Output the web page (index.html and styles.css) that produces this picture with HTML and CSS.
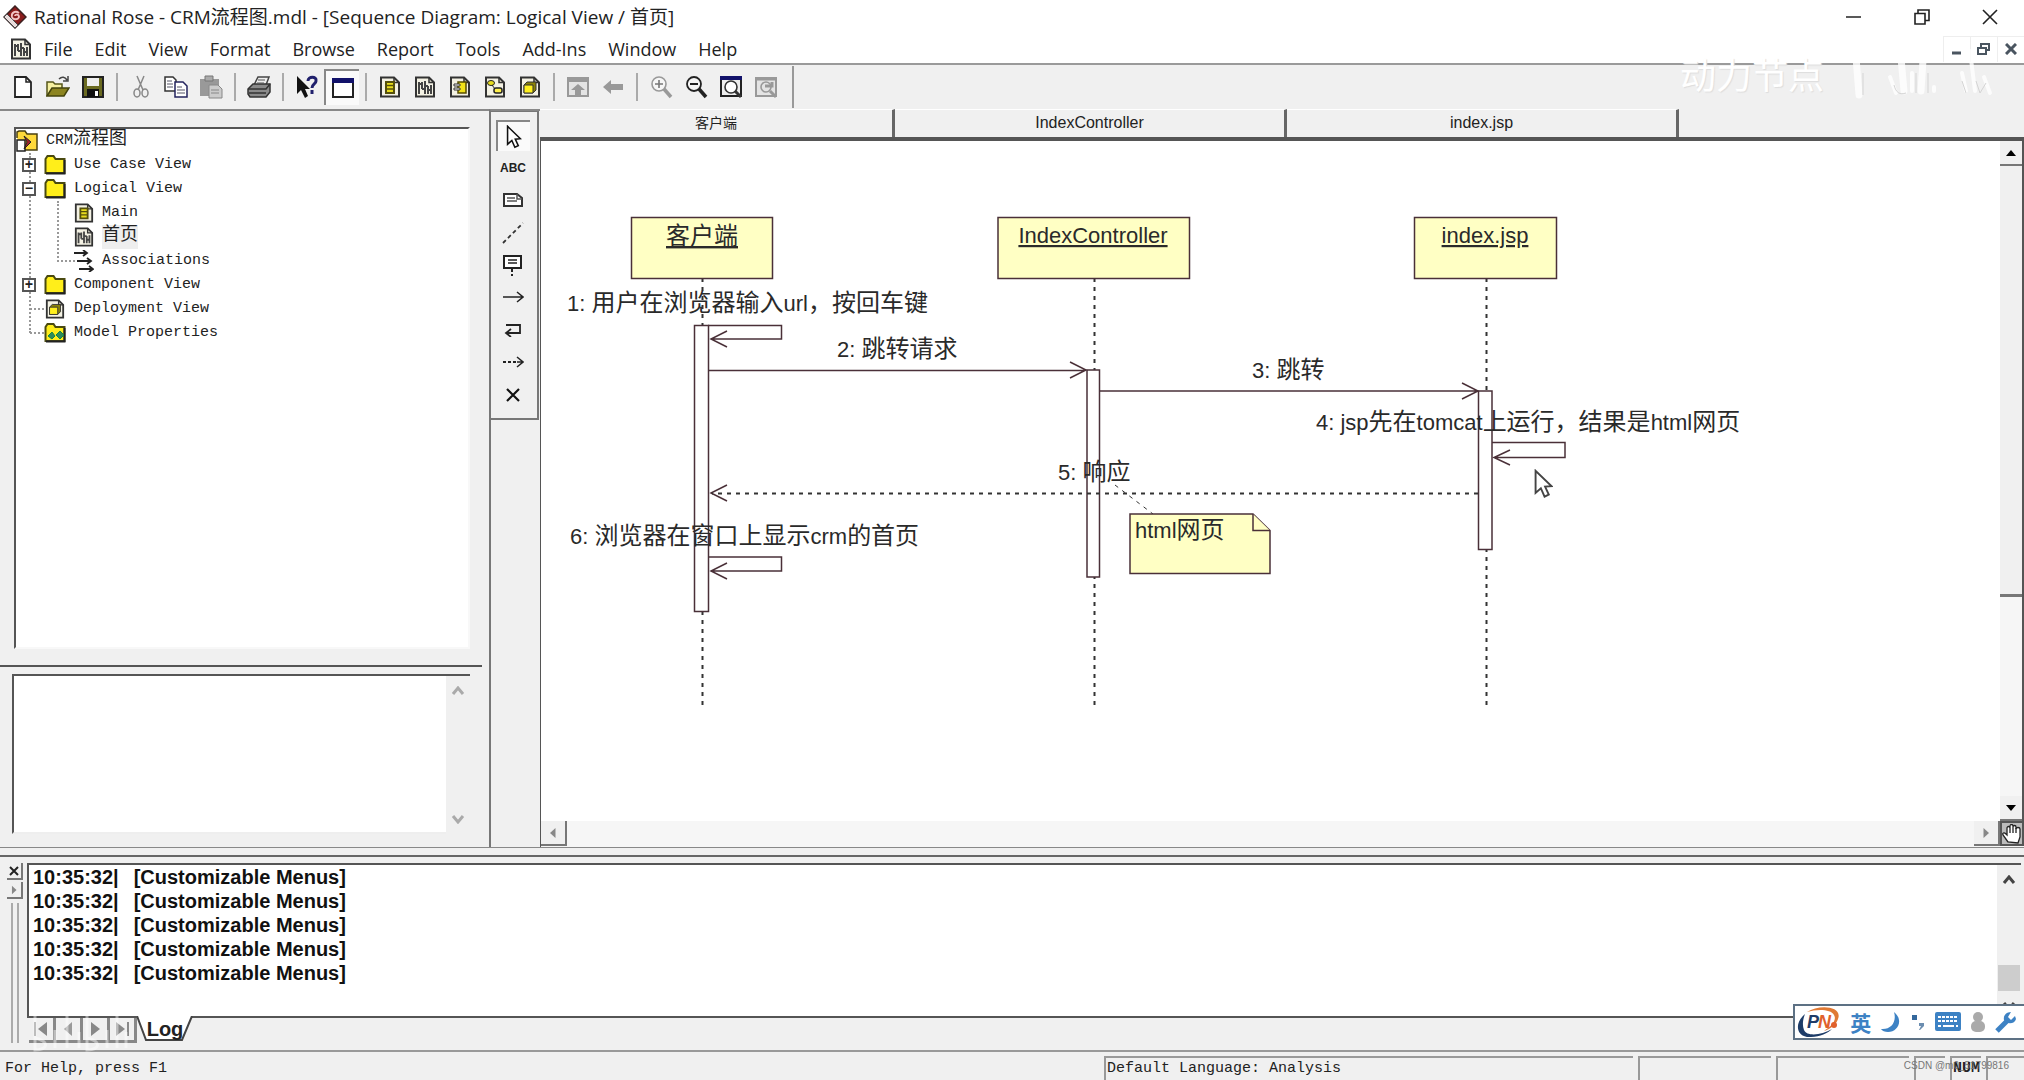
FILE: index.html
```html
<!DOCTYPE html>
<html lang="zh-CN">
<head>
<meta charset="utf-8">
<title>Rational Rose - CRM流程图.mdl</title>
<link rel="stylesheet" href="styles.css">
</head>
<body>
<svg class="sprite" aria-hidden="true">
  <symbol id="page" viewBox="0 0 22 22"><path d="M2 1.500h13l5 5v14H2z" fill="#f4f2e4" stroke="#333" stroke-width="2"/><path d="M15 1.500v5h5" fill="none" stroke="#333" stroke-width="1.500"/></symbol>
  <symbol id="class-doc" viewBox="0 0 22 22"><use href="#page"/><path d="M7 6h8v11H7z" fill="#e8dc1c" stroke="#55500c" stroke-width="2"/><path d="M7 9.500h8M7 13h8" stroke="#55500c" stroke-width="1.500"/></symbol>
  <symbol id="seq-doc" viewBox="0 0 22 22"><use href="#page"/><path d="M5 6v12M8 6v7M11 5v13M14 10v8M17 9v9M5 8h3M8 13h3M11 10h3M14 14h3" stroke="#444" stroke-width="2" fill="none"/></symbol>
  <symbol id="comp-doc" viewBox="0 0 22 22"><use href="#page"/><path d="M9 6h8v11H9z" fill="#f2e21a" stroke="#554c00" stroke-width="1.500"/><path d="M5 8h6v2H5zM5 12h6v2H5z" fill="#fff" stroke="#333"/></symbol>
  <symbol id="state-doc" viewBox="0 0 22 22"><use href="#page"/><ellipse cx="7" cy="7" rx="3.500" ry="2.500" fill="#e8dc1c" stroke="#222"/><path d="M8 9l3 4" stroke="#222"/><rect x="10" y="12" width="8" height="5" rx="2" fill="#fff04a" stroke="#222" stroke-width="1.500"/></symbol>
  <symbol id="cube-doc" viewBox="0 0 22 22"><use href="#page"/><path d="M5 9l3-3h9v8l-3 3H5z" fill="#8a8208" stroke="#333"/><path d="M5 9h9v8H5z" fill="#fff01e" stroke="#333"/></symbol>
  <symbol id="folder" viewBox="0 0 22 20"><path d="M1.500 18V4l2-3h6l2 3h9v14z" fill="#ffee1a" stroke="#4a4a10" stroke-width="2"/><path d="M20.500 5v13.500H2" fill="none" stroke="#222" stroke-width="2"/></symbol>
  <symbol id="pointer" viewBox="0 0 18 28"><path d="M1.500 1.500v21l5-4.500 3.500 8 4-2-3.500-7.500 6-.5z" stroke-width="1.800"/></symbol>
  <symbol id="chevron" viewBox="0 0 14 10"><path d="M2 8l5-6 5 6" fill="none" stroke="currentColor" stroke-width="3"/></symbol>
  <symbol id="tri" viewBox="0 0 12 12"><path d="M8.500 1v10L3 6z" fill="currentColor"/></symbol>
</svg>

<header class="titlebar">
  <svg class="app-icon" width="24" height="24" viewBox="0 0 24 24"><path d="M12 1l11 11-11 11L1 12z" fill="#8b1c1c" stroke="#3c2020" stroke-width="1.500"/><path d="M1 12l11 11 3-3L4 9z" fill="#e9dcdc" stroke="#444"/><path d="M16 8c-4-3-8 0-7 4 1 3 6 3 7 0 0-3-4-3-4-1" fill="none" stroke="#f3c4c4" stroke-width="1.800"/></svg>
  <h1 class="title">Rational Rose - CRM流程图.mdl - [Sequence Diagram: Logical View / 首页]</h1>
  <div class="window-buttons">
    <button aria-label="Minimize"><svg width="16" height="16"><path d="M0 8h15" stroke="#222" stroke-width="1.500"/></svg></button>
    <button aria-label="Restore"><svg width="16" height="16"><path d="M1 4.500h10V15H1zM4 4V1h11v10.500h-4" fill="none" stroke="#222" stroke-width="1.600"/></svg></button>
    <button aria-label="Close"><svg width="16" height="16"><path d="M1 1l14 14M15 1L1 15" stroke="#222" stroke-width="1.600"/></svg></button>
  </div>
</header>

<nav class="menubar">
  <svg class="doc-icon" width="22" height="22"><use href="#seq-doc"/></svg>
  <button>File</button><button>Edit</button><button>View</button><button>Format</button><button>Browse</button><button>Report</button><button>Tools</button><button>Add-Ins</button><button>Window</button><button>Help</button>
  <div class="mdi-buttons">
    <button aria-label="Minimize diagram"><svg width="12" height="14"><path d="M1 11h9" stroke="#4a5560" stroke-width="3"/></svg></button>
    <button aria-label="Restore diagram"><svg width="14" height="14"><path d="M1 6h8v6H1zM4 5V2h8v6H9" fill="none" stroke="#4a5560" stroke-width="2"/></svg></button>
    <button aria-label="Close diagram"><svg width="12" height="12"><path d="M1 1l10 10M11 1L1 11" stroke="#4a5560" stroke-width="3"/></svg></button>
  </div>
  <div class="watermark" aria-hidden="true"><span>动力节点</span>
    <svg width="150" height="60" viewBox="0 0 150 60"><g fill="none" stroke="#fff" stroke-linecap="round" opacity=".8"><path d="M9 2l4 50M54 4l4 44M78 2l-3 46" stroke-width="7"/><path d="M44 34l6 16M66 30v18M88 44v4M124 8l5 40M138 34l6 16M116 30l4 18" stroke-width="4"/></g><g fill="none" stroke="#d4d4d4"><path d="M17 30v22M48 42c2 8 6 10 12 8M70 30v20M82 30v20M130 38l4 12 6-10M116 38l4 12"/></g></svg>
  </div>
</nav>

<div class="toolbar" role="toolbar">
  <button aria-label="New"><svg width="24" height="24"><path d="M4 2h11l5 5v15H4z" fill="#fff" stroke="#222" stroke-width="1.800"/><path d="M15 2v5h5" fill="none" stroke="#222" stroke-width="1.500"/></svg></button>
  <button aria-label="Open"><svg width="24" height="24"><path d="M1 21V7h6l2 2h7v4" fill="#f6f0a0" stroke="#55551a" stroke-width="1.500"/><path d="M1 21l5-8h17l-5 8z" fill="#8c8420" stroke="#44440c" stroke-width="1.500"/><path d="M13 4c3-3 6-2 8 1m1-4v5h-5" fill="none" stroke="#444" stroke-width="1.500"/></svg></button>
  <button aria-label="Save"><svg width="24" height="24"><path d="M2 2h20v20H2z" fill="#6a6a20" stroke="#222" stroke-width="2"/><path d="M6 3h12v8H6z" fill="#eee"/><path d="M6 14h12v8H6z" fill="#111"/><path d="M14 16h3v5h-3z" fill="#fff"/></svg></button>
  <i class="sep"></i>
  <button aria-label="Cut"><svg width="24" height="24"><g fill="none" stroke="#888" stroke-width="1.500"><path d="M8 1l6 14M15 1L9 15"/><ellipse cx="8" cy="18" rx="3" ry="4"/><ellipse cx="16" cy="18" rx="3" ry="4"/></g></svg></button>
  <button aria-label="Copy"><svg width="24" height="24"><g fill="#fff" stroke="#333" stroke-width="1.500"><path d="M1 2h8l3 3v11H1z"/><path d="M11 7h8l4 4v11H11z" stroke="#23235e"/></g><path d="M3 6h5M3 9h6M3 12h6M13 12h5M13 15h8M13 18h8" stroke="#556"/></svg></button>
  <button aria-label="Paste"><svg width="24" height="24"><path d="M1 4h19v17H1z" fill="#999"/><path d="M6 1h8v5H6z" fill="#aaa" stroke="#777"/><path d="M10 10h9l4 4v9H10z" fill="#ccc" stroke="#888"/><path d="M12 15h8M12 18h8" stroke="#888"/></svg></button>
  <i class="sep"></i>
  <button aria-label="Print"><svg width="26" height="24"><path d="M8 10l4-8h11l-3 8z" fill="#eee" stroke="#444" stroke-width="1.500"/><path d="M2 14l5-5h17v8l-4 5H4l-2-3z" fill="#8a8a8a" stroke="#333" stroke-width="1.500"/><path d="M2 14h18l4-5M3 18h17" fill="none" stroke="#333" stroke-width="1.500"/><path d="M12 5h7M11 8h7" stroke="#555"/></svg></button>
  <i class="sep"></i>
  <button aria-label="Context help"><svg width="26" height="24"><path d="M3 1v18l4-4 4 8 3-2-3-7h5z" fill="#111"/><path d="M14 6c0-5 9-5 8 0 0 3-4 3-4 7m0 2v4" fill="none" stroke="#20206c" stroke-width="3"/></svg></button>
  <button class="pressed" aria-label="Documentation window"><svg width="24" height="24"><path d="M2 3h20v18H2z" fill="#fff" stroke="#222" stroke-width="2"/><path d="M1 2h22v5H1z" fill="#12126a"/></svg></button>
  <i class="sep"></i>
  <button aria-label="Class diagram"><svg width="22" height="22"><use href="#class-doc"/></svg></button>
  <button aria-label="Interaction diagram"><svg width="22" height="22"><use href="#seq-doc"/></svg></button>
  <button aria-label="Component diagram"><svg width="22" height="22"><use href="#comp-doc"/></svg></button>
  <button aria-label="State diagram"><svg width="22" height="22"><use href="#state-doc"/></svg></button>
  <button aria-label="Deployment diagram"><svg width="22" height="22"><use href="#cube-doc"/></svg></button>
  <i class="sep"></i>
  <button aria-label="Parent"><svg width="24" height="24"><path d="M2 3h20v18H2z" fill="#e4e4e4" stroke="#999" stroke-width="2"/><path d="M2 5h20" stroke="#999" stroke-width="4"/><path d="M12 9l7 6h-4v6H9v-6H5z" fill="#999"/></svg></button>
  <button aria-label="Previous"><svg width="24" height="24"><path d="M2 12l8-7v4h12v6H10v4z" fill="#999"/></svg></button>
  <i class="sep"></i>
  <button aria-label="Zoom in"><svg width="24" height="24"><circle cx="10" cy="9" r="7" fill="#f6f6f6" stroke="#999" stroke-width="1.600"/><path d="M6 9h8M10 5v8" stroke="#777" stroke-width="1.600"/><path d="M15 14l7 8" stroke="#999" stroke-width="3.500"/></svg></button>
  <button aria-label="Zoom out"><svg width="24" height="24"><circle cx="10" cy="9" r="7" fill="#f6f6f6" stroke="#222" stroke-width="1.800"/><path d="M6 9h8" stroke="#222" stroke-width="2"/><path d="M15 14l7 8" stroke="#222" stroke-width="3.500"/></svg></button>
  <button aria-label="Fit in window"><svg width="24" height="24"><path d="M2 3h20v18H2z" fill="#eee" stroke="#222" stroke-width="2"/><path d="M1 3h22" stroke="#12126a" stroke-width="4"/><circle cx="12" cy="12" r="6" fill="#fff" stroke="#333" stroke-width="1.600"/><path d="M16 16l6 6" stroke="#333" stroke-width="3"/></svg></button>
  <button aria-label="Undo fit"><svg width="24" height="24"><path d="M2 3h20v18H2z" fill="#e4e4e4" stroke="#999" stroke-width="2"/><path d="M1 4h22" stroke="#999" stroke-width="3"/><circle cx="12" cy="12" r="5" fill="none" stroke="#999" stroke-width="1.600"/><path d="M11 11h7V7M16 16l6 6" fill="none" stroke="#999" stroke-width="3"/></svg></button>
  <i class="toolbar-end"></i>
</div>

<main class="workspace">
  <aside class="browser">
    <div class="tree-box">
      <ul class="tree">
        <li><div class="row"><svg class="root-icon" width="22" height="22"><path d="M1 8V2l2-1h6l2 3h10v16H8" fill="#ffd93a" stroke="#4a4010" stroke-width="1.500"/><path d="M1 10h8v11H1z" fill="#fff" stroke="#222" stroke-width="1.500"/><path d="M8 6l7 6-7 7 3-7z" fill="#a3242a" stroke="#222"/></svg><span>CRM<b>流程图</b></span></div>
          <ul class="branch">
            <li><div class="row"><button class="toggle" aria-label="Expand">+</button><svg width="22" height="20"><use href="#folder"/></svg><span>Use Case View</span></div></li>
            <li><div class="row"><button class="toggle" aria-label="Collapse">−</button><svg width="22" height="20"><use href="#folder"/></svg><span>Logical View</span></div>
              <ul class="leaves">
                <li><div class="row"><svg width="20" height="20"><use href="#class-doc"/></svg><span>Main</span></div></li>
                <li><div class="row"><svg width="20" height="20"><use href="#seq-doc"/></svg><span class="selected"><b>首页</b></span></div></li>
                <li><div class="row"><svg width="20" height="22"><path d="M0 3h13M9 0l4 3-4 3M3 11h14M13 8l4 3-4 3M5 19h14M15 16l4 3-4 3" fill="none" stroke="#222" stroke-width="1.800"/></svg><span>Associations</span></div></li>
              </ul>
            </li>
            <li><div class="row"><button class="toggle" aria-label="Expand">+</button><svg width="22" height="20"><use href="#folder"/></svg><span>Component View</span></div></li>
            <li><div class="row plain"><svg width="22" height="20"><use href="#cube-doc"/></svg><span>Deployment View</span></div></li>
            <li><div class="row plain"><svg width="22" height="20"><use href="#folder"/><path d="M4 13l4-4 3 4-3 3zM12 12l4-4 4 4-4 4z" fill="#2f8a5c" stroke="#184"/></svg><span>Model Properties</span></div></li>
          </ul>
        </li>
      </ul>
    </div>
    <div class="doc-pane">
      <textarea class="doc-text" aria-label="Documentation"></textarea>
      <div class="doc-scroll"><svg width="14" height="10"><use href="#chevron"/></svg><svg class="down" width="14" height="10"><use href="#chevron"/></svg></div>
    </div>
  </aside>

  <div class="palette-column">
    <div class="palette" role="toolbar">
      <button class="pressed" aria-label="Select"><svg width="16" height="24" fill="#fff" stroke="#111"><use href="#pointer"/></svg></button>
      <button class="abc">ABC</button>
      <button aria-label="Note"><svg width="22" height="16"><path d="M2 2h13l5 4v8H2z" fill="#fff" stroke="#333" stroke-width="2"/><path d="M15 2v5h5M5 6h8M5 9h10" fill="none" stroke="#555" stroke-width="1.500"/></svg></button>
      <button aria-label="Anchor note"><svg width="22" height="22"><path d="M1 21L21 1" stroke="#333" stroke-width="1.800" stroke-dasharray="4 3"/></svg></button>
      <button aria-label="Object"><svg width="22" height="22"><path d="M2 2h17v12H2z" fill="#fff" stroke="#222" stroke-width="2"/><path d="M6 6h9M6 9h9" stroke="#222" stroke-width="1.500"/><path d="M10 15v7" stroke="#222" stroke-width="2" stroke-dasharray="3 2"/></svg></button>
      <button aria-label="Object message"><svg width="22" height="12"><path d="M1 6h19M15 1l6 5-6 5" fill="none" stroke="#222" stroke-width="1.500"/></svg></button>
      <button aria-label="Message to self"><svg width="18" height="14"><path d="M2 2h14v8H2M7 6l-5 4 5 4" fill="none" stroke="#222" stroke-width="1.800"/></svg></button>
      <button aria-label="Return message"><svg width="22" height="12"><path d="M1 6h14" stroke="#222" stroke-width="2" stroke-dasharray="3 2"/><path d="M15 1l6 5-6 5M15 6h6" fill="none" stroke="#222" stroke-width="1.500"/></svg></button>
      <button aria-label="Destruction marker"><svg width="16" height="16"><path d="M2 2l12 12M14 2L2 14" stroke="#111" stroke-width="2.200"/></svg></button>
    </div>
  </div>

  <section class="diagram">
    <div class="object-header"><span class="first cjk">客户端</span><span>IndexController</span><span>index.jsp</span></div>
    <div class="canvas-row">
      <div class="canvas">
        <svg class="drawing" width="1458" height="681" viewBox="541 141 1458 681">
          <g class="life"><path d="M702.500 278v432M1094.500 278v432M1486.500 278v432"/></g>
          <g class="bar"><path d="M694.500 325.500h14v286h-14zM1087 370h12.500v207H1087zM1478.500 391H1492v158.500h-13.500z"/></g>
          <g class="line">
            <path d="M708 325.500h73.500V339H711M727 331l-16 8 16 8M708 557h73.500v14H711M727 563l-16 8 16 8M1492 442.500h73v15h-70M1510 450l-16 7.500 16 7.500"/>
            <path d="M708 370.500h377M1070 362l16 8-16 8M1099 391h378M1462 383l16 8-16 8M727 485l-16 8 16 8"/>
            <path class="dashed" d="M1478 493.500H712"/><path class="dashed thin" d="M1115 485l38 29"/>
          </g>
          <g class="node"><path d="M631.500 217.500h141v61h-141zM998 217.500h191.500v61H998zM1414.500 217.500h142v61h-142zM1130 514h123l17 16.500v43h-140z"/><path d="M1253 514v16.500h17"/></g>
          <g class="name"><text class="han" x="702" y="244">客户端</text><text x="1093" y="243">IndexController</text><text x="1485" y="243">index.jsp</text></g>
          <g class="label">
            <text x="567" y="311">1: <tspan>用户在浏览器输入</tspan>url<tspan>，按回车键</tspan></text>
            <text x="837" y="357">2: <tspan>跳转请求</tspan></text>
            <text x="1252" y="378">3: <tspan>跳转</tspan></text>
            <text x="1316" y="430">4: jsp<tspan>先在</tspan>tomcat<tspan>上运行，结果是</tspan>html<tspan>网页</tspan></text>
            <text x="1058" y="480">5: <tspan>响应</tspan></text>
            <text x="570" y="544">6: <tspan>浏览器在窗口上显示</tspan>crm<tspan>的首页</tspan></text>
            <text x="1135" y="538">html<tspan>网页</tspan></text>
          </g>
          <svg x="1534" y="469" width="19" height="30" fill="#fff" stroke="#444"><use href="#pointer"/></svg>
        </svg>
      </div>
      <div class="vscroll">
        <button class="up" aria-label="Scroll up"><svg width="12" height="12"><path d="M1 9h10L6 3z"/></svg></button>
        <div class="vthumb"></div>
        <button class="dn" aria-label="Scroll down"><svg width="12" height="12"><path d="M1 3h10L6 9z"/></svg></button>
      </div>
    </div>
    <div class="hscroll">
      <button aria-label="Scroll left"><svg width="12" height="12"><use href="#tri"/></svg></button>
      <button aria-label="Scroll right"><svg class="flip" width="12" height="12"><use href="#tri"/></svg></button>
      <button class="hand" aria-label="Pan"><svg width="20" height="20"><path d="M6 18L1 11c-1-2 1-3 3-1l1 1V4c0-2 3-2 3 0V2c0-2 3-2 3 0v1c0-2 3-2 3 0v2c0-2 4-2 4 0v8l-2 6z" fill="#fff" stroke="#222" stroke-width="1.300"/><path d="M8 4v5M11 3v6M14 4v5" stroke="#222" stroke-width="1.300"/></svg></button>
    </div>
  </section>
</main>

<section class="log">
  <div class="log-grip">
    <button aria-label="Close log"><svg width="10" height="10"><path d="M1 1l8 8M9 1L1 9" stroke="#222" stroke-width="2"/></svg></button>
    <button aria-label="Expand log"><svg class="flip" width="10" height="10" viewBox="0 0 12 12"><use href="#tri"/></svg></button>
    <i></i>
  </div>
  <div class="log-body">
    <div class="log-view">
      <ul class="log-lines">
        <li><span>10:35:32|</span><span>[Customizable Menus]</span></li>
        <li><span>10:35:32|</span><span>[Customizable Menus]</span></li>
        <li><span>10:35:32|</span><span>[Customizable Menus]</span></li>
        <li><span>10:35:32|</span><span>[Customizable Menus]</span></li>
        <li><span>10:35:32|</span><span>[Customizable Menus]</span></li>
      </ul>
      <div class="log-scroll"><svg width="14" height="10"><use href="#chevron"/></svg><i></i><svg class="down" width="14" height="10"><use href="#chevron"/></svg></div>
    </div>
    <div class="log-tabs">
      <button class="step" aria-label="First tab"><svg width="16" height="16"><path d="M2 1v14" stroke="#888" stroke-width="2"/><path d="M14 1v14L5 8z" fill="#888"/></svg></button>
      <button class="step" aria-label="Previous tab"><svg width="16" height="16"><path d="M12 1v14L4 8z" fill="#999"/></svg></button>
      <button class="step" aria-label="Next tab"><svg width="16" height="16"><path d="M4 1v14l9-7z" fill="#888"/></svg></button>
      <button class="step" aria-label="Last tab"><svg width="16" height="16"><path d="M14 1v14" stroke="#888" stroke-width="2"/><path d="M2 1v14l9-7z" fill="#888"/></svg></button>
      <button class="tab"><svg width="56" height="26"><path d="M0 0l9 24h36l10-24" fill="#fff" stroke="#444" stroke-width="2"/></svg><span>Log</span></button>
      <svg class="ghost" width="104" height="50" aria-hidden="true"><path d="M8 8v34c12 0 16-8 0-12M28 22v18M40 6v34M52 24v16M60 8v34c12 0 16-8 0-12M80 22v18M90 6v34M99 24v16" fill="none" stroke="#fff" stroke-width="3" opacity=".45"/></svg>
    </div>
  </div>
</section>

<footer class="statusbar">
  <span class="message">For Help, press F1</span>
  <span class="panel language">Default Language: Analysis</span>
  <span class="panel medium"></span>
  <span class="panel medium"></span>
  <span class="panel small"></span>
  <span class="panel small num">NUM</span>
  <span class="panel last"></span>
</footer>
<span class="credit">CSDN @m0_51799816</span>

<div class="ime">
  <svg width="44" height="32" viewBox="0 0 44 32"><path d="M10 6C22-2 46 0 41 13c-2 6-8 10-14 12 8-5 13-11 10-16C34 3 20 3 10 6z" fill="#e07a35"/><path d="M8 8C-4 18 0 32 14 31c9 0 17-4 21-8-10 6-25 8-28 1-2-5-1-11 1-16z" fill="#1d3c68"/><text x="10" y="22" class="ime-p">P</text><text x="21" y="22" class="ime-n">N</text><circle cx="37" cy="19" r="3" fill="#e0602c"/></svg>
  <button>英</button>
  <svg width="22" height="22"><path d="M14 1c10 8 4 20-6 20-3 0-6-1-7-3 10 1 16-7 13-17z" fill="#3d82c4"/></svg>
  <svg width="14" height="18"><rect x="1" y="2" width="5" height="5" fill="#34689c"/><path d="M8 10h5v3l-4 4H8l2-4H8z" fill="#6b8db0"/></svg>
  <svg width="26" height="20"><rect width="26" height="19" rx="2" fill="#3d82c4"/><path d="M3 5h20M3 9h20" stroke="#fff" stroke-width="2" stroke-dasharray="3 1"/><path d="M3 14h3M8 14h11M21 14h2" stroke="#fff" stroke-width="2"/></svg>
  <svg width="16" height="20"><circle cx="8" cy="5" r="5" fill="#aaa"/><rect x="1" y="9" width="14" height="11" rx="5" fill="#aaa"/></svg>
  <svg width="22" height="22"><path d="M2 20L14 8" stroke="#3d82c4" stroke-width="5"/><path d="M20 5l-4 4-3-3 3-5c-5 0-8 4-7 8 3 5 11 4 12-1z" fill="#3d82c4"/></svg>
</div>
</body>
</html>
```
FILE: styles.css
```css
* { box-sizing: border-box; }
body {
  margin: 0;
  height: 100vh;
  display: flex;
  flex-direction: column;
  position: relative;
  overflow: hidden;
  background: #f0f0f0;
  color: #222;
  font-family: "Liberation Sans", "Noto Sans CJK SC", sans-serif;
}
button {
  margin: 0; padding: 0; border: 0; background: none;
  font: inherit; color: inherit;
  display: flex; align-items: center; justify-content: center;
}
ul { list-style: none; margin: 0; padding: 0; }
svg { display: block; flex: none; }
.sprite { position: absolute; width: 0; height: 0; }
.flip, .down { transform: rotate(180deg); }

/* title and menu */
.titlebar, .menubar {
  flex: none;
  display: flex;
  align-items: center;
  background: #fff;
  font-family: "Open Sans", "Noto Sans CJK SC", sans-serif;
}
.titlebar { height: 34px; padding-left: 3px; gap: 7px; }
.title { margin: 0; font-size: 19px; font-weight: 400; line-height: 34px; white-space: nowrap; }
.window-buttons { display: flex; margin-left: auto; }
.window-buttons button { width: 68px; height: 30px; }
.menubar {
  height: 31px; padding-left: 10px; gap: 22px;
  border-bottom: 2px solid #9a9a9a;
  font-size: 18px; line-height: 28px; color: #222;
  position: relative;
}
.doc-icon { margin-right: -10px; }
.mdi-buttons { display: flex; margin-left: auto; }
.mdi-buttons button { width: 27px; height: 26px; border-left: 1px solid #eee; border-top: 1px solid #eee; }
.watermark {
  position: absolute; right: 28px; top: 0;
  display: flex; align-items: center; gap: 22px;
  color: #fff; font-family: "Noto Sans CJK SC", sans-serif;
  font-size: 36px; line-height: 78px; z-index: 2;
  text-shadow: 1px 1px 1px #ddd;
  pointer-events: none;
}

/* toolbar */
.toolbar { flex: none; height: 44px; display: flex; align-items: center; padding-left: 5px; }
.toolbar button { width: 35px; height: 36px; }
.pressed { background: #fafafa; border-left: 2px solid #888; border-top: 2px solid #888; }
.sep { width: 13px; height: 28px; display: flex; justify-content: center; }
.sep::before { content: ""; width: 2px; background: #aaa; }
.toolbar-end { width: 2px; height: 42px; margin-left: 9px; background: #999; }

/* workspace */
.workspace { flex: 1; min-height: 0; display: flex; border-bottom: 1px solid #888; }
.browser {
  flex: none; width: 489px; border-top: 2px solid #888;
  display: flex; flex-direction: column;
}
.tree-box {
  flex: 1; min-height: 0; margin: 16px 19px 16px 14px;
  background: #fff; border: 2px solid #555; border-right-color: #f8f8f8; border-bottom-color: #f8f8f8;
}
.tree { font: 15px/24px "Liberation Mono", "Noto Sans CJK SC", monospace; }
.tree b { font-size: 18px; font-weight: 400; line-height: 20px; }
.row { display: flex; align-items: center; height: 24px; gap: 8px; white-space: nowrap; }
.branch { position: relative; padding-left: 6px; }
.branch::before {
  content: ""; position: absolute; left: 13px; top: 0; bottom: 12px;
  border-left: 2px dotted #999;
}
.toggle {
  position: relative; width: 14px; height: 14px; background: #fff;
  border: 2px solid #555; font: bold 14px/10px "Liberation Mono", monospace;
}
.plain::before { content: ""; width: 14px; height: 0; }
.plain { position: relative; }
.plain::after { content: ""; position: absolute; left: 8px; width: 14px; border-top: 2px dotted #999; }
.leaves { position: relative; padding-left: 52px; }
.leaves::before {
  content: ""; position: absolute; left: 35px; top: 0; bottom: 11px; width: 16px;
  border-left: 2px dotted #999; border-bottom: 2px dotted #999;
}
.selected { background: #eee; }
.doc-pane {
  flex: none; height: 182px; margin-right: 7px; padding: 7px 12px 13px 12px;
  border-top: 2px solid #555; display: flex;
}
.doc-text {
  flex: 1; resize: none; outline: 0; background: #fff;
  border: 2px solid #555; border-right: 0; border-bottom-color: #eee;
}
.doc-scroll {
  width: 24px; background: #f0f0f0; border-top: 2px solid #555; color: #aaa;
  display: flex; flex-direction: column; justify-content: space-between; align-items: center; padding: 10px 0;
}
.palette-column { flex: none; width: 51px; border-left: 2px solid #777; border-top: 2px solid #888; }
.palette {
  height: 309px; padding: 8px 4px 8px 5px; width: 48px;
  border: solid #777; border-width: 1px 2px 2px 0;
  display: flex; flex-direction: column; justify-content: space-between;
}
.palette button { height: 31px; width: 34px; }
.palette .abc { font-size: 12px; font-weight: 700; line-height: 20px; }

/* diagram window */
.diagram { flex: 1; min-width: 0; display: flex; flex-direction: column; }
.object-header { flex: none; height: 28px; display: flex; font-size: 16px; line-height: 26px; text-align: center; }
.object-header span { width: 392px; border-right: 3px solid #666; border-top: 1px solid #fff; }
.object-header .first { width: 355px; }
.object-header .cjk { font-size: 14px; }
.canvas-row {
  flex: 1; min-height: 0; display: flex;
  border: solid #555; border-width: 4px 2px 0 1px;
}
.canvas { flex: 1; min-width: 0; background: #fff; overflow: hidden; }
.vscroll { flex: none; width: 22px; background: #f6f6f6; display: flex; flex-direction: column; }
.vscroll button { height: 25px; border-bottom: 2px solid #777; background: #f0f0f0; }
.vthumb { height: 431px; background: #f0f0f0; border-bottom: 3px solid #777; }
.vscroll .dn { margin-top: auto; }
.hscroll {
  flex: none; height: 26px; display: flex; background: #f6f6f6; color: #888;
  border-left: 1px solid #555;
}
.hscroll button { width: 26px; height: 25px; background: #f0f0f0; border: solid #777; border-width: 0 2px 2px 0; }
.hscroll button:nth-child(2) { margin-left: auto; }
.hscroll .hand { width: 24px; background: #bbb; border-width: 2px; border-color: #555; }
.life, .dashed { fill: none; stroke: #333; stroke-width: 2; stroke-dasharray: 4 5; }
.bar { fill: #fff; stroke: #4a3038; stroke-width: 1.5; }
.line { fill: none; stroke: #4a3038; stroke-width: 1.5; }
.thin { stroke-width: 1; }
.node { fill: #ffffc4; stroke: #4a3038; stroke-width: 1.5; }
.name, .label { font-size: 22px; fill: #2a2a2a; white-space: pre; }
.name { text-anchor: middle; text-decoration: underline; }
.label tspan, .name .han { font-size: 24px; }

/* log */
.log {
  flex: none; height: 197px; display: flex; margin-top: 7px;
  border-top: 2px solid #666; border-bottom: 2px solid #999;
  padding: 6px 3px 7px 7px; gap: 4px;
}
.log-grip { width: 16px; display: flex; flex-direction: column; gap: 2px; color: #888; }
.log-grip button { height: 17px; border: solid #777; border-width: 0 2px 2px 0; }
.log-grip i { flex: 1; margin: 2px 4px 0; border: solid #aaa; border-width: 0 2px; }
.log-body { flex: 1; min-width: 0; display: flex; flex-direction: column; }
.log-view {
  flex: 1; display: flex; background: #fff;
  border: solid #555; border-width: 2px 0 2px 2px;
}
.log-lines { flex: 1; padding: 0 0 0 4px; font-size: 20px; font-weight: 700; line-height: 24px; color: #111; }
.log-lines li { display: flex; gap: 15px; }
.log-scroll { width: 24px; background: #f0f0f0; color: #444; display: flex; flex-direction: column; align-items: center; padding: 10px 0 5px; }
.log-scroll i { width: 22px; height: 26px; margin: auto 0 10px; background: #cdcdcd; }
.log-tabs { flex: none; height: 25px; display: flex; padding-left: 2px; position: relative; }
.step { width: 27px; border: solid #888; border-width: 0 3px 3px 0; }
.tab { position: relative; width: 56px; font-size: 20px; font-weight: 700; margin-top: -2px; }
.tab svg { position: absolute; left: 0; top: 0; }
.tab span { position: relative; }
.ghost { position: absolute; left: 0; top: -10px; }

/* status bar */
.statusbar {
  flex: none; height: 28px; display: flex; gap: 5px; padding: 4px 0 0 5px;
  font: 15px/26px "Liberation Mono", "Noto Sans CJK SC", monospace; white-space: nowrap;
}
.message { flex: 1; }
.panel { border-left: 2px solid #999; border-top: 2px solid #999; padding-left: 1px; line-height: 22px; }
.language { width: 529px; }
.medium { width: 133px; }
.small { width: 31px; }
.last { width: 38px; }
.num { font-weight: 700; }
.credit { position: absolute; right: 15px; bottom: 6px; font-size: 10px; line-height: 16px; color: #777; }
.ime {
  position: absolute; right: 0; bottom: 40px; height: 36px; width: 231px;
  display: flex; align-items: center; justify-content: space-between; padding: 0 7px 0 2px;
  background: #fff; border: 2px solid #5d7184; border-right: 0;
  color: #3d82c4; font: bold 21px/30px "Noto Sans CJK SC", sans-serif;
}
.ime-p, .ime-n { font: italic bold 18px "Liberation Sans", sans-serif; fill: #1d3c68; }
.ime-n { fill: #e0602c; }
```
